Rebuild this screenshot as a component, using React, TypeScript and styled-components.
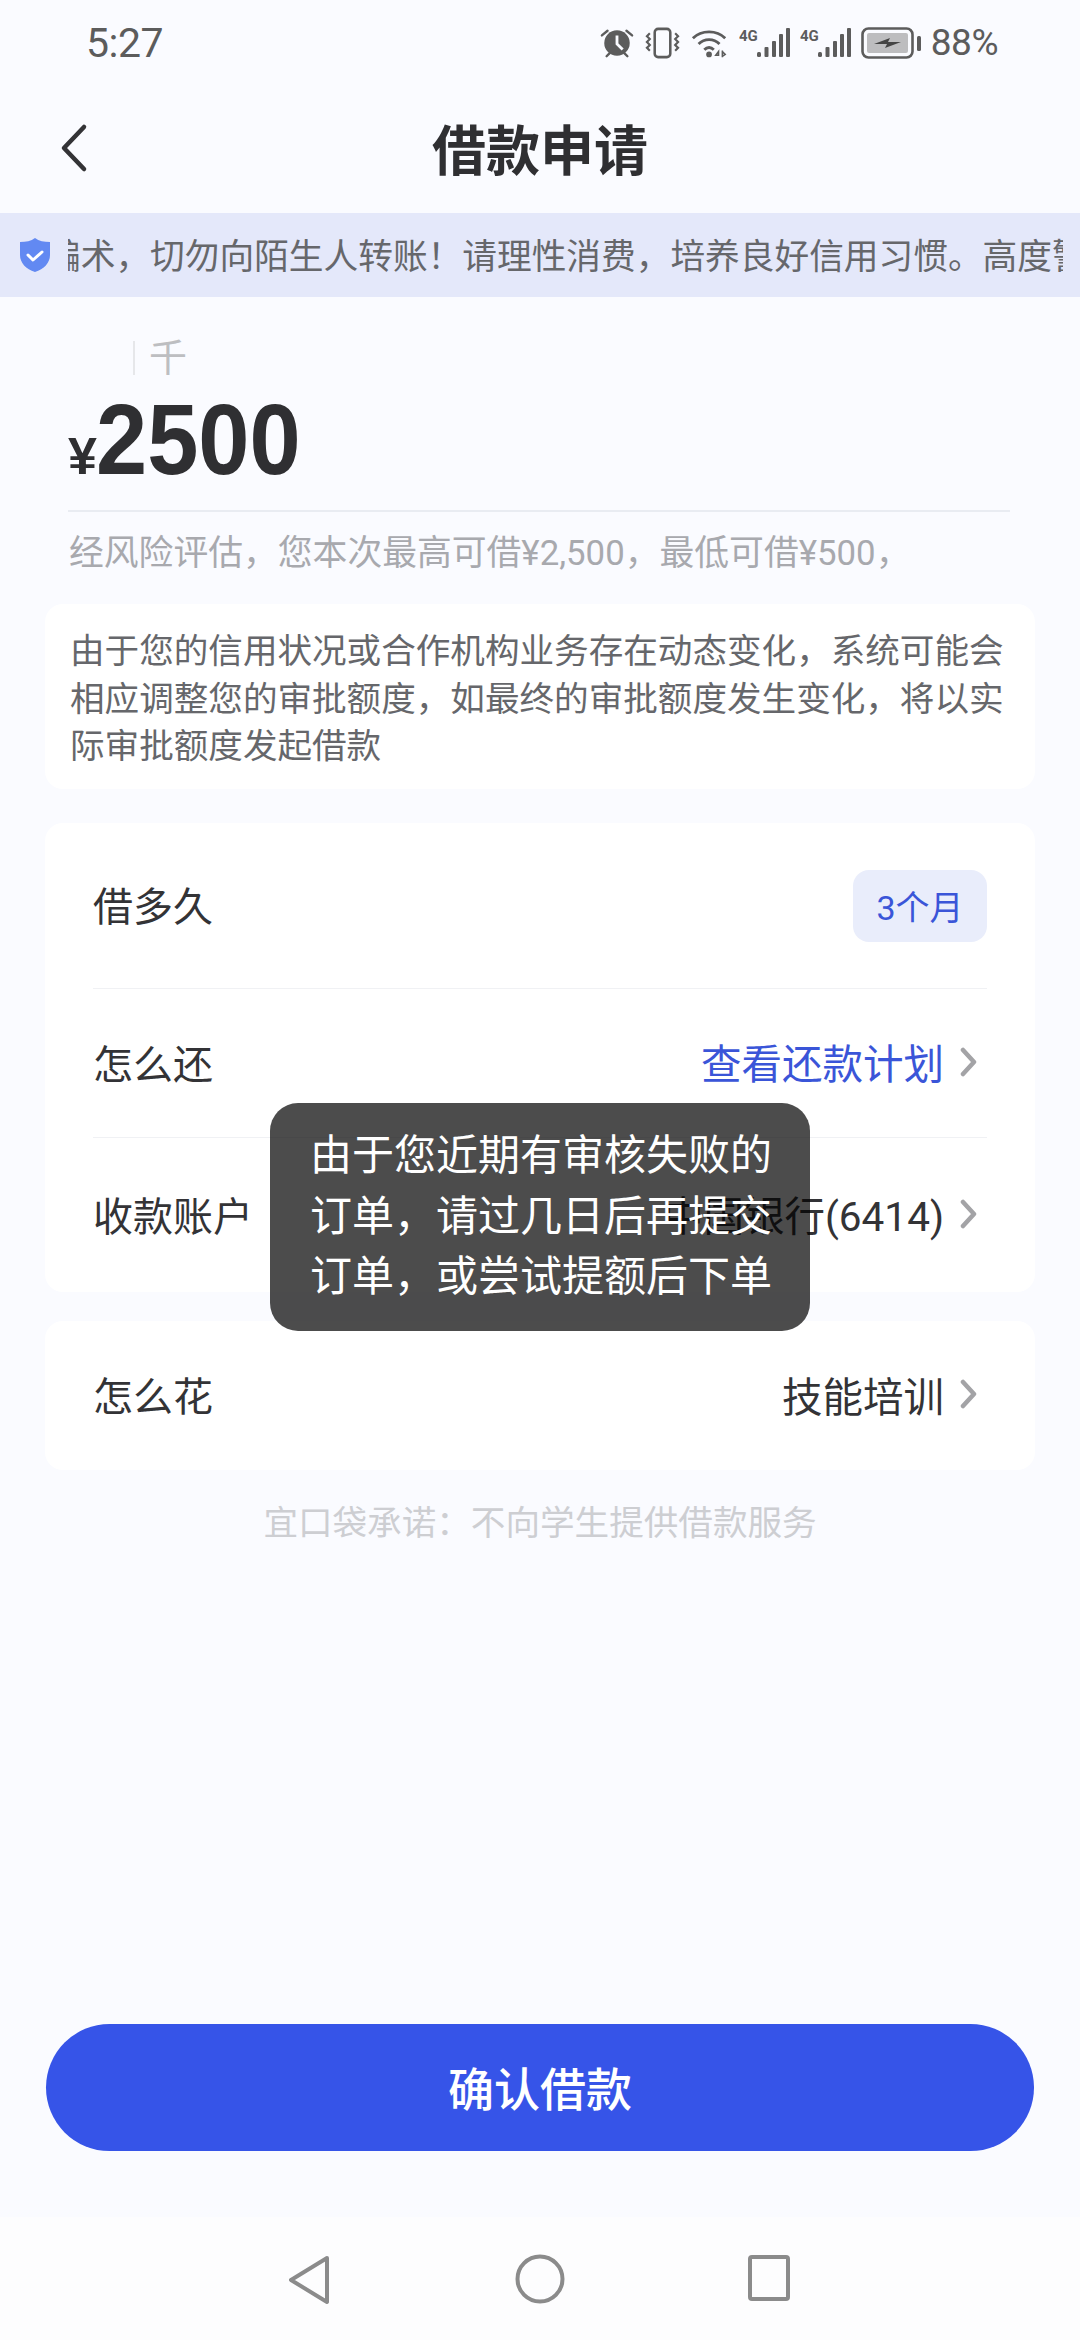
import React from 'react'
import styled, { createGlobalStyle } from 'styled-components'

// full-width punctuation kept as escapes so it can't get swapped for ASCII
const COMMA = '\uFF0C'
const BANG = '\uFF01'
const COLON = '\uFF1A'

const NOTICE = `骗术${COMMA}切勿向陌生人转账${BANG}请理性消费${COMMA}培养良好信用习惯。高度警惕`
const HINT = `经风险评估${COMMA}您本次最高可借¥2,500${COMMA}最低可借¥500${COMMA}`
const NOTE = `由于您的信用状况或合作机构业务存在动态变化${COMMA}系统可能会相应调整您的审批额度${COMMA}如最终的审批额度发生变化${COMMA}将以实际审批额度发起借款`
const PLEDGE = `宜口袋承诺${COLON}不向学生提供借款服务`
const TOAST_LINES = [
  '由于您近期有审核失败的',
  `订单${COMMA}请过几日后再提交`,
  `订单${COMMA}或尝试提额后下单`,
]

const GlobalStyle = createGlobalStyle`
  html, body {
    margin: 0;
    padding: 0;
    background: #fafbff;
  }
  * {
    box-sizing: border-box;
  }
`

const Page = styled.div`
  position: relative;
  width: 1080px;
  height: 2340px;
  overflow: hidden;
  display: flex;
  flex-direction: column;
  background: #fafbff;
  font-family: Roboto, "Noto Sans CJK SC", sans-serif;
  color: #333336;
`

const StatusBar = styled.div`
  height: 87px;
  display: flex;
  align-items: center;
  justify-content: space-between;
  padding: 0 82px 2px 86px;
  color: #5c5c5c;
`

const Time = styled.span`
  font-size: 41px;
  letter-spacing: -0.5px;
`

const StatusIcons = styled.div`
  display: flex;
  align-items: center;
  gap: 10px;
`

const Percent = styled.span`
  font-size: 37px;
  letter-spacing: -0.5px;
`

const NavBar = styled.div`
  position: relative;
  height: 126px;
  padding-bottom: 5px;
  display: flex;
  align-items: center;
  justify-content: center;
`

const BackIcon = styled.svg`
  position: absolute;
  left: 60px;
  top: 36px;
`

const Title = styled.h1`
  margin: 0;
  font-size: 54px;
  font-weight: 700;
  color: #2f2f32;
`

const Notice = styled.div`
  height: 84px;
  display: flex;
  align-items: center;
  background: #e4e8fa;
  padding: 0 17px 0 19px;
  gap: 17px;
`

const NoticeClip = styled.div`
  flex: 1;
  overflow: hidden;
  white-space: nowrap;
  padding-bottom: 3px;
`

const NoticeTrack = styled.div`
  font-size: 34.7px;
  color: #66676b;
  transform: translateX(-22px);
`

const AmountBlock = styled.div`
  padding: 40px 70px 0 68px;
`

const UnitRow = styled.div`
  height: 42px;
  display: flex;
  align-items: center;
  padding-left: 65px;
  gap: 14px;
`

const Cursor = styled.span`
  width: 2px;
  height: 34px;
  background: #e6e7ea;
`

const Unit = styled.span`
  font-size: 38px;
  line-height: 42px;
  color: #bdbec1;
`

const AmountRow = styled.div`
  height: 133px;
  display: flex;
  align-items: baseline;
  border-bottom: 2px solid #e9ecf2;
  font-family: "Liberation Sans", Arial, sans-serif;
  font-weight: 700;
  color: #2f2f32;
  line-height: 120px;
`

const Yen = styled.span`
  font-size: 52px;
  letter-spacing: -1px;
`

const Amount = styled.span`
  display: inline-block;
  font-size: 100px;
  transform: scaleX(0.92);
  transform-origin: left;
`

const Hint = styled.p`
  margin: 0;
  padding: 20px 0 0 1px;
  font-size: 34.8px;
  line-height: 42px;
  color: #a8a9ae;
  white-space: nowrap;
`

const Cards = styled.div`
  padding: 30px 45px 0;
  display: flex;
  flex-direction: column;
`

const Card = styled.section<{ $gap?: number }>`
  background: #fff;
  border-radius: 18px;
  margin-bottom: ${p => p.$gap ?? 0}px;
`

const NoteText = styled.p`
  margin: 0;
  padding: 24px 15px 22px 25px;
  height: 185px;
  font-size: 34.6px;
  line-height: 47.5px;
  color: #66676b;
`

const Row = styled.div<{ $height: number; $divider?: boolean }>`
  height: ${p => p.$height}px;
  margin: 0 48px;
  display: flex;
  align-items: center;
  justify-content: space-between;
  border-bottom: ${p => (p.$divider ? '1px solid #f0f1f4' : 'none')};
`

const Label = styled.span`
  font-size: 40px;
  color: #333336;
  padding-bottom: 3px;
`

const Value = styled.span<{ $blue?: boolean }>`
  display: flex;
  align-items: center;
  gap: 16px;
  padding: 0 10px 3px 0;
  font-size: 40.5px;
  color: ${p => (p.$blue ? '#3a55d8' : '#333336')};
`

const Pill = styled.span`
  width: 134px;
  height: 72px;
  display: flex;
  align-items: center;
  justify-content: center;
  border-radius: 16px;
  background: #e9edfb;
  color: #3a55d8;
  font-size: 34px;
`

const Pledge = styled.p`
  margin: 0;
  padding-top: 31px;
  text-align: center;
  font-size: 34.6px;
  line-height: 44px;
  color: #cdced2;
`

const Toast = styled.div`
  position: absolute;
  left: 270px;
  top: 1103px;
  width: 540px;
  height: 228px;
  padding: 23px 0 0 40px;
  border-radius: 28px;
  background: rgba(0, 0, 0, 0.7);
  color: #fff;
  font-size: 42px;
  line-height: 60.5px;
`

const Footer = styled.div`
  margin-top: auto;
  display: flex;
  flex-direction: column;
`

const ConfirmButton = styled.button`
  all: unset;
  margin: 0 46px;
  height: 127px;
  padding-bottom: 3px;
  box-sizing: border-box;
  border-radius: 64px;
  background: #3654e8;
  color: #fff;
  display: flex;
  align-items: center;
  justify-content: center;
  font-size: 46px;
  font-weight: 500;
`

const SystemNav = styled.div`
  margin-top: 66px;
  height: 123px;
  background: #fdfdfe;
  display: grid;
  grid-template-columns: repeat(3, 228px);
  justify-content: center;
  justify-items: center;
  padding-top: 37px;
`

const Chevron = () => (
  <svg width="17" height="30" viewBox="0 0 17 30" fill="none">
    <path d="M3 3l11 12L3 27" stroke="#a3a3a6" strokeWidth="4.5" strokeLinecap="round" strokeLinejoin="round" />
  </svg>
)

const SignalIcon = () => (
  <svg width="51" height="32" viewBox="0 0 51 32">
    <g fill="#5c5c5c">
      <rect x="18" y="25" width="4" height="5" rx="1.5" />
      <rect x="25.5" y="20" width="4" height="10" rx="1" />
      <rect x="33" y="14" width="4" height="16" rx="1" />
      <rect x="40" y="7" width="4" height="23" rx="1" />
      <rect x="47" y="1" width="4" height="29" rx="1" />
      <text x="0" y="14" fontSize="15" fontWeight="700" fontFamily="Roboto, sans-serif">4G</text>
    </g>
  </svg>
)

const AlarmIcon = () => (
  <svg width="34" height="32" viewBox="0 0 36 32" fill="none">
    <circle cx="18" cy="16" r="13.5" fill="#5c5c5c" />
    <path d="M18 8v9l6 6" stroke="#fafbff" strokeWidth="3" />
    <path d="M2 8l6-5M34 8l-6-5M7 30l3-3M29 30l-3-3" stroke="#5c5c5c" strokeWidth="2.5" strokeLinecap="round" />
  </svg>
)

const VibrateIcon = () => (
  <svg width="37" height="32" viewBox="0 0 38 32" fill="none" stroke="#5c5c5c">
    <rect x="11" y="1.5" width="16" height="29" rx="3.5" strokeWidth="2.6" />
    <path d="M6 6l-3 3 3 3-3 3 3 3-3 3 3 3M32 6l3 3-3 3 3 3-3 3 3 3-3 3" strokeWidth="2.2" />
  </svg>
)

const WifiIcon = () => (
  <svg width="38" height="32" viewBox="0 0 40 32" fill="none" stroke="#5c5c5c">
    <path d="M2 11C11 2 27 2 36 11" strokeWidth="3" />
    <path d="M8 17c6-6 16-6 22 0" strokeWidth="3" />
    <path d="M14 23c3-3 7-3 10 0" strokeWidth="3" />
    <circle cx="19" cy="28" r="3" fill="#5c5c5c" stroke="none" />
    <path d="M29 25l-3 4h3zM33 24v7M33 25l3 3-3 2" strokeWidth="1.6" />
  </svg>
)

const BatteryIcon = () => (
  <svg width="60" height="32" viewBox="0 0 60 32" fill="none">
    <rect x="1.5" y="1.5" width="50" height="29" rx="6" stroke="#5c5c5c" strokeWidth="2.6" />
    <rect x="6" y="6" width="41" height="20" rx="2" fill="#bdbdbf" />
    <rect x="56" y="9" width="4" height="15" rx="1.5" fill="#5c5c5c" />
    <path d="M13 17l16-6-2 4 13 0-16 6 2-4z" fill="#444" />
  </svg>
)

const ShieldIcon = () => (
  <svg width="32" height="36" viewBox="0 0 32 36">
    <path d="M16 1c4 3 9 4 15 4v13c0 8-6 14-15 17C7 32 1 26 1 18V5c6 0 11-1 15-4z" fill="#6289f2" />
    <path d="M9 18l5 5 9-8" fill="none" stroke="#fff" strokeWidth="3" strokeLinecap="round" strokeLinejoin="round" />
  </svg>
)

const NavBack = () => (
  <svg width="46" height="52" viewBox="0 0 46 52" fill="none">
    <path d="M38 4L2 26l36 22z" stroke="#8b8b8b" strokeWidth="4" strokeLinejoin="round" strokeLinecap="round" />
  </svg>
)

const NavHome = () => (
  <svg width="50" height="50" viewBox="0 0 50 50" fill="none">
    <circle cx="25" cy="25" r="22.5" stroke="#8b8b8b" strokeWidth="4" />
  </svg>
)

const NavRecent = () => (
  <svg width="46" height="48" viewBox="0 0 46 48" fill="none">
    <rect x="5" y="3" width="38" height="42" rx="2" stroke="#8b8b8b" strokeWidth="4" />
  </svg>
)

export default function App() {
  return (
    <Page>
      <GlobalStyle />
      <StatusBar>
        <Time>5:27</Time>
        <StatusIcons>
          <AlarmIcon />
          <VibrateIcon />
          <WifiIcon />
          <SignalIcon />
          <SignalIcon />
          <BatteryIcon />
          <Percent>88%</Percent>
        </StatusIcons>
      </StatusBar>

      <NavBar>
        <BackIcon width="28" height="50" viewBox="0 0 28 50" fill="none">
          <path d="M24 4L4 25l20 21" stroke="#333336" strokeWidth="4.5" strokeLinecap="round" strokeLinejoin="round" />
        </BackIcon>
        <Title>借款申请</Title>
      </NavBar>

      <Notice>
        <ShieldIcon />
        <NoticeClip>
          <NoticeTrack>{NOTICE}</NoticeTrack>
        </NoticeClip>
      </Notice>

      <AmountBlock>
        <UnitRow>
          <Cursor />
          <Unit>千</Unit>
        </UnitRow>
        <AmountRow>
          <Yen>¥</Yen>
          <Amount>2500</Amount>
        </AmountRow>
        <Hint>{HINT}</Hint>
      </AmountBlock>

      <Cards>
        <Card $gap={34}>
          <NoteText>{NOTE}</NoteText>
        </Card>
        <Card $gap={29}>
          <Row $height={166} $divider>
            <Label>借多久</Label>
            <Pill>3个月</Pill>
          </Row>
          <Row $height={149} $divider>
            <Label>怎么还</Label>
            <Value $blue>
              查看还款计划
              <Chevron />
            </Value>
          </Row>
          <Row $height={154}>
            <Label>收款账户</Label>
            <Value>
              中国银行(6414)
              <Chevron />
            </Value>
          </Row>
        </Card>
        <Card>
          <Row $height={149}>
            <Label>怎么花</Label>
            <Value>
              技能培训
              <Chevron />
            </Value>
          </Row>
        </Card>
        <Pledge>{PLEDGE}</Pledge>
      </Cards>

      <Footer>
        <ConfirmButton>确认借款</ConfirmButton>
        <SystemNav>
          <NavBack />
          <NavHome />
          <NavRecent />
        </SystemNav>
      </Footer>

      <Toast>
        {TOAST_LINES.map(line => (
          <div key={line}>{line}</div>
        ))}
      </Toast>
    </Page>
  )
}
